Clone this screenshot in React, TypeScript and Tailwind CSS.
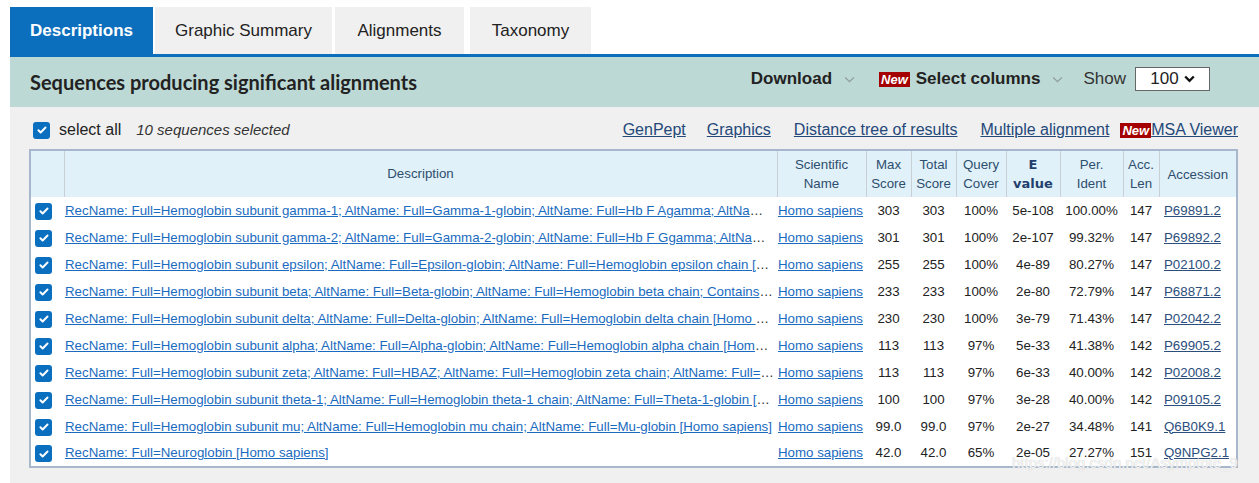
import React from 'react';

interface Hit {
  desc: string;
  max: string;
  total: string;
  cover: string;
  evalue: string;
  ident: string;
  len: string;
  acc: string;
}

const hits: Hit[] = [
  { desc: 'RecName: Full=Hemoglobin subunit gamma-1; AltName: Full=Gamma-1-globin; AltName: Full=Hb F Agamma; AltName: Full=Hemoglobin gamma-1 chain; AltName: Full=Hemoglobin gamma-A chain [Homo sapiens]', max: '303', total: '303', cover: '100%', evalue: '5e-108', ident: '100.00%', len: '147', acc: 'P69891.2' },
  { desc: 'RecName: Full=Hemoglobin subunit gamma-2; AltName: Full=Gamma-2-globin; AltName: Full=Hb F Ggamma; AltName: Full=Hemoglobin gamma-2 chain; AltName: Full=Hemoglobin gamma-G chain [Homo sapiens]', max: '301', total: '301', cover: '100%', evalue: '2e-107', ident: '99.32%', len: '147', acc: 'P69892.2' },
  { desc: 'RecName: Full=Hemoglobin subunit epsilon; AltName: Full=Epsilon-globin; AltName: Full=Hemoglobin epsilon chain [Homo sapiens]', max: '255', total: '255', cover: '100%', evalue: '4e-89', ident: '80.27%', len: '147', acc: 'P02100.2' },
  { desc: 'RecName: Full=Hemoglobin subunit beta; AltName: Full=Beta-globin; AltName: Full=Hemoglobin beta chain; Contains: RecName: Full=LVV-hemorphin-7 [Homo sapiens]', max: '233', total: '233', cover: '100%', evalue: '2e-80', ident: '72.79%', len: '147', acc: 'P68871.2' },
  { desc: 'RecName: Full=Hemoglobin subunit delta; AltName: Full=Delta-globin; AltName: Full=Hemoglobin delta chain [Homo sapiens]', max: '230', total: '230', cover: '100%', evalue: '3e-79', ident: '71.43%', len: '147', acc: 'P02042.2' },
  { desc: 'RecName: Full=Hemoglobin subunit alpha; AltName: Full=Alpha-globin; AltName: Full=Hemoglobin alpha chain [Homo sapiens]', max: '113', total: '113', cover: '97%', evalue: '5e-33', ident: '41.38%', len: '142', acc: 'P69905.2' },
  { desc: 'RecName: Full=Hemoglobin subunit zeta; AltName: Full=HBAZ; AltName: Full=Hemoglobin zeta chain; AltName: Full=Zeta-globin [Homo sapiens]', max: '113', total: '113', cover: '97%', evalue: '6e-33', ident: '40.00%', len: '142', acc: 'P02008.2' },
  { desc: 'RecName: Full=Hemoglobin subunit theta-1; AltName: Full=Hemoglobin theta-1 chain; AltName: Full=Theta-1-globin [Homo sapiens]', max: '100', total: '100', cover: '97%', evalue: '3e-28', ident: '40.00%', len: '142', acc: 'P09105.2' },
  { desc: 'RecName: Full=Hemoglobin subunit mu; AltName: Full=Hemoglobin mu chain; AltName: Full=Mu-globin [Homo sapiens]', max: '99.0', total: '99.0', cover: '97%', evalue: '2e-27', ident: '34.48%', len: '141', acc: 'Q6B0K9.1' },
  { desc: 'RecName: Full=Neuroglobin [Homo sapiens]', max: '42.0', total: '42.0', cover: '65%', evalue: '2e-05', ident: '27.27%', len: '151', acc: 'Q9NPG2.1' },
];

// Checkbox azul con la palomita blanca, igual que el de la tabla original.
const Check: React.FC = () => (
  <span className="inline-flex w-[17px] h-[17px] rounded-[3px] bg-[#0b6fc0] items-center justify-center align-middle">
    <svg viewBox="0 0 16 16" className="w-[12px] h-[12px]" fill="none" stroke="white" strokeWidth="2.6" strokeLinecap="round" strokeLinejoin="round">
      <path d="M3.2 8.3l3 3 6.5-6.6" />
    </svg>
  </span>
);

const NewBadge: React.FC = () => (
  <span className="inline-block bg-[#a50000] text-white font-bold italic text-[13px] leading-[15px] px-[2px] py-0">New</span>
);

const Chevron: React.FC = () => (
  <svg viewBox="0 0 12 8" className="w-[11px] h-[7px] ml-3" fill="none" stroke="#8a9a9a" strokeWidth="1.3">
    <path d="M1 1.5l5 5 5-5" />
  </svg>
);

const headers: { label: React.ReactNode; w: string; bold?: boolean }[] = [
  { label: <>Scientific<br />Name</>, w: 'w-[89px]' },
  { label: <>Max<br />Score</>, w: 'w-[45px]' },
  { label: <>Total<br />Score</>, w: 'w-[45px]' },
  { label: <>Query<br />Cover</>, w: 'w-[50px]' },
  { label: <>E<br />value</>, w: 'w-[54px]', bold: true },
  { label: <>Per.<br />Ident</>, w: 'w-[63px]' },
  { label: <>Acc.<br />Len</>, w: 'w-[36px]' },
  { label: 'Accession', w: 'w-[78px]' },
];

export default function App() {
  return (
    <div className="relative w-[1259px] h-[483px] overflow-hidden bg-white font-['Liberation_Sans',Arial,sans-serif] text-[#222]">
      {/* pestañas */}
      <div className="flex items-end pl-[10px] pt-[7px] gap-[3px]">
        <div className="w-[143px] h-[47px] bg-[#0b6fbd] text-white font-bold text-[17px] flex items-center justify-center">
          Descriptions
        </div>
        <div className="w-[177px] h-[47px] bg-[#f0f0f0] text-[17px] flex items-center justify-center ml-[-1px]">Graphic Summary</div>
        <div className="w-[129px] h-[47px] bg-[#f0f0f0] text-[17px] flex items-center justify-center">Alignments</div>
        <div className="w-[121px] h-[47px] bg-[#f0f0f0] text-[17px] flex items-center justify-center ml-[3px]">Taxonomy</div>
      </div>

      <div className="ml-[10px] border-t-[3px] border-[#0b6fbd]">
        {/* barra verde */}
        <div className="h-[50px] bg-[#bdd9d5] flex items-center pl-[20px] pr-[49px]">
          <h2 className="font-['Lato',sans-serif] font-bold text-[20px] text-[#222] mt-[-1px]">
            Sequences producing significant alignments
          </h2>
          <div className="ml-auto flex items-center text-[17px] mt-[-6px]">
            <span className="font-bold text-[#222]">Download</span>
            <Chevron />
            <span className="ml-[24px]"><NewBadge /></span>
            <span className="font-bold text-[#222] ml-[6px]">Select columns</span>
            <Chevron />
            <span className="ml-[20px] text-[#333]">Show</span>
            <div className="ml-[9px] w-[75px] h-[24px] bg-white border border-[#666] flex items-center justify-center gap-[5px] text-[17px]">
              <span>100</span>
              <svg viewBox="0 0 12 8" className="w-[11px] h-[8px]" fill="none" stroke="#111" strokeWidth="2.6">
                <path d="M1.3 1.3l4.7 4.7 4.7-4.7" />
              </svg>
            </div>
          </div>
        </div>

        {/* zona gris */}
        <div className="bg-[#f0f0f0] h-[376px] pl-[19px] pr-[21px] pt-[13px]">
          <div className="flex items-center h-[20px] pl-[4px] text-[16px]">
            <Check />
            <span className="ml-[9px]">select all</span>
            <span className="ml-[15px] italic text-[15px] text-[#333]">10 sequences selected</span>
            <div className="ml-auto flex items-center text-[#24487a] underline">
              <span>GenPept</span>
              <span className="ml-[21px]">Graphics</span>
              <span className="ml-[23px]">Distance tree of results</span>
              <span className="ml-[23px]">Multiple alignment</span>
              <span className="ml-[11px] no-underline"><NewBadge /></span>
              <span>MSA Viewer</span>
            </div>
          </div>

          <table className="mt-[9px] w-[1209px] table-fixed border-collapse border-2 border-[#a7b8cc] bg-white text-[13.3px]">
            <thead>
              <tr className="h-[47px] bg-[#e1f1f9] text-[#2d4e6e]">
                <th className="w-[34px] border-r border-[#c8d0d6] font-normal"></th>
                <th className="w-[713px] border-r border-[#c8d0d6] font-normal">Description</th>
                {headers.map((h, i) => (
                  <th
                    key={i}
                    className={`${h.w} ${i < headers.length - 1 ? 'border-r border-[#c8d0d6]' : ''} leading-[19px] ${
                      h.bold ? 'font-bold font-["DejaVu_Sans",sans-serif] text-[#1f3f6e] text-[13px]' : 'font-normal'
                    }`}
                  >
                    {h.label}
                  </th>
                ))}
              </tr>
            </thead>
            <tbody>
              {hits.map((h) => (
                <tr key={h.acc} className="h-[27px]">
                  <td className="pl-[4px] align-middle">
                    <Check />
                  </td>
                  <td className="pl-px pr-[3px] truncate text-[#333]">
                    <a className="underline text-[#1a6bc0]">{h.desc}</a>
                  </td>
                  <td className="pl-px truncate">
                    <a className="underline text-[#1a6bc0]">Homo sapiens</a>
                  </td>
                  <td className="text-center">{h.max}</td>
                  <td className="text-center">{h.total}</td>
                  <td className="text-center">{h.cover}</td>
                  <td className="text-center">{h.evalue}</td>
                  <td className="text-center">{h.ident}</td>
                  <td className="text-center">{h.len}</td>
                  <td className="pl-[5px]">
                    <a className="underline text-[#2b4e7c]">{h.acc}</a>
                  </td>
                </tr>
              ))}
            </tbody>
          </table>
        </div>
      </div>

      <div className="absolute left-[1012px] top-[452px] text-[15px] text-white/80 [text-shadow:0_0_1px_#bbb] pointer-events-none">
        https://blog.csdn.net/Asymptote_9
      </div>
    </div>
  );
}
